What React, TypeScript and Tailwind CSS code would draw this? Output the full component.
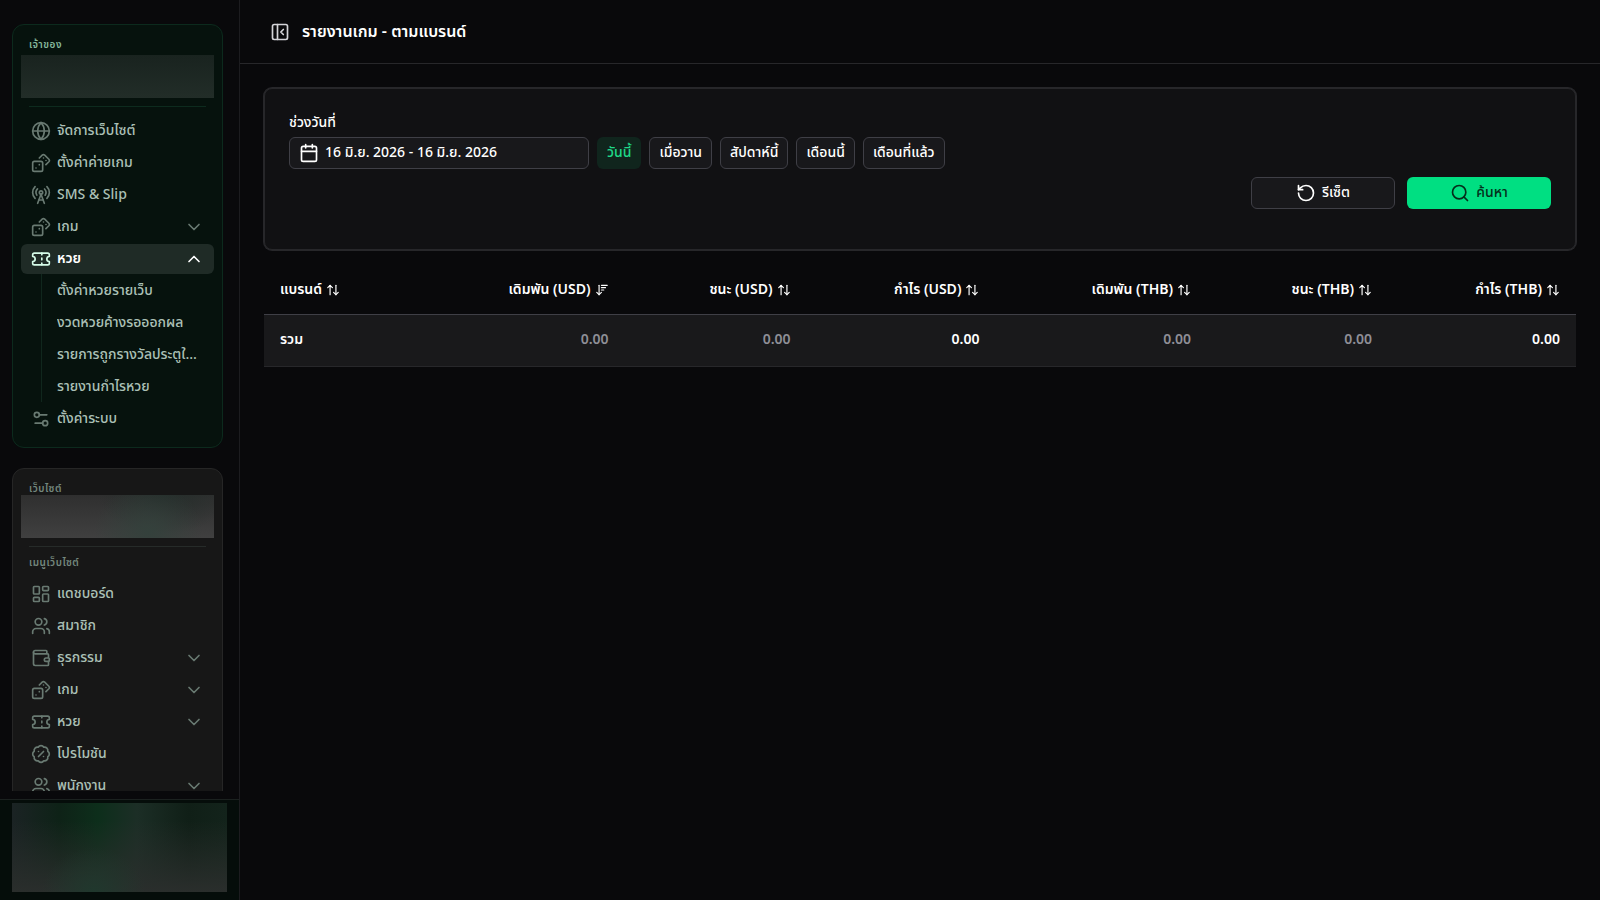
import { useState, type ReactNode } from "react";
import {
  ArrowDownWideNarrow,
  ArrowUpDown,
  BadgePercent,
  Calendar,
  ChevronDown,
  ChevronUp,
  Dices,
  Globe,
  LayoutDashboard,
  PanelLeftClose,
  RadioTower,
  RotateCcw,
  Search,
  Settings2,
  Users,
  Wallet,
  type LucideIcon,
} from "lucide-react";

function TicketIcon({ className }: { className?: string }) {
  return (
    <svg
      viewBox="0 0 24 24"
      fill="none"
      stroke="currentColor"
      strokeWidth="2"
      strokeLinecap="round"
      strokeLinejoin="round"
      className={className}
      aria-hidden="true"
    >
      <path d="M2 9a3 3 0 0 1 0 6v2a2 2 0 0 0 2 2h16a2 2 0 0 0 2-2v-2a3 3 0 0 1 0-6V7a2 2 0 0 0-2-2H4a2 2 0 0 0-2 2Z" />
      <path d="M13 5v2M13 17v2M13 11v2" />
    </svg>
  );
}

type IconType = LucideIcon | typeof TicketIcon;

type Item = { label: string; icon: IconType; expandable?: boolean; children?: string[] };

const ownerItems: Item[] = [
  { label: "จัดการเว็บไซต์", icon: Globe },
  { label: "ตั้งค่าค่ายเกม", icon: Dices },
  { label: "SMS & Slip", icon: RadioTower },
  { label: "เกม", icon: Dices, expandable: true },
  {
    label: "หวย",
    icon: TicketIcon,
    expandable: true,
    children: ["ตั้งค่าหวยรายเว็บ", "งวดหวยค้างรอออกผล", "รายการถูกรางวัลประตูใหญ่", "รายงานกำไรหวย"],
  },
  { label: "ตั้งค่าระบบ", icon: Settings2 },
];

const siteItems: Item[] = [
  { label: "แดชบอร์ด", icon: LayoutDashboard },
  { label: "สมาชิก", icon: Users },
  { label: "ธุรกรรม", icon: Wallet, expandable: true },
  { label: "เกม", icon: Dices, expandable: true },
  { label: "หวย", icon: TicketIcon, expandable: true },
  { label: "โปรโมชัน", icon: BadgePercent },
  { label: "พนักงาน", icon: Users, expandable: true },
];

function NavItem({ item }: { item: Item }) {
  const Icon = item.icon;
  const open = Boolean(item.children);
  const body = (
    <>
      <Icon className={open ? "size-5 shrink-0 text-[#d6fbe8]" : "size-5 shrink-0 text-[#697a72]"} />
      <span className="min-w-0 flex-1 truncate text-left">{item.label}</span>
      {item.expandable &&
        (open ? (
          <ChevronUp className="size-5 shrink-0 text-white" />
        ) : (
          <ChevronDown className="size-5 shrink-0 text-[#697a72]" />
        ))}
    </>
  );
  return (
    <li>
      {item.expandable ? (
        <button
          type="button"
          aria-expanded={open}
          className={
            open
              ? "flex h-[30px] w-full items-center gap-1.5 rounded-md bg-[#1f2b26] px-2.5 font-semibold text-white"
              : "flex h-[30px] w-full items-center gap-1.5 rounded-md px-2.5"
          }
        >
          {body}
        </button>
      ) : (
        <a href="#" className="flex h-[30px] items-center gap-1.5 rounded-md px-2.5">
          {body}
        </a>
      )}
      {item.children && (
        <ul className="ml-5 flex flex-col gap-0.5 border-l border-[#10271d] pt-0.5">
          {item.children.map((label) => (
            <li key={label}>
              <a href="#" className="flex h-[30px] items-center pr-3.5 pl-[15px]">
                <span className="truncate">{label}</span>
              </a>
            </li>
          ))}
        </ul>
      )}
    </li>
  );
}

function NavList({ items }: { items: Item[] }) {
  return (
    <ul className="flex flex-col gap-0.5 text-sm font-medium text-[#abc0b6]">
      {items.map((item) => (
        <NavItem key={item.label} item={item} />
      ))}
    </ul>
  );
}

function Sidebar() {
  return (
    <aside className="flex w-60 shrink-0 flex-col border-r border-[#1c1c1f] bg-[#09090b]">
      <nav className="mb-2 flex min-h-0 flex-1 flex-col gap-5 overflow-hidden pt-6 pr-4 pl-3">
        <section className="shrink-0 rounded-xl border border-[#0c2a1d] bg-[#06120d] px-2 pt-3 pb-[13px]">
          <h2 className="px-2 text-[10px] leading-4 font-semibold tracking-wider text-[#84b69b]">เจ้าของ</h2>
          <div className="mt-0.5 h-[43px] bg-[linear-gradient(to_bottom,#19231f,#222d28)]" />
          <hr className="mx-2 mt-2 mb-[9px] border-[#0d2b1e]" />
          <NavList items={ownerItems} />
        </section>
        <section className="shrink-0 rounded-xl border border-[#262626] bg-[#171717] px-2 pt-3.5 pb-3">
          <h2 className="px-2 text-[10px] leading-3 font-semibold tracking-wider text-[#74877e]">เว็บไซต์</h2>
          <div className="h-[43px] bg-[radial-gradient(ellipse_28%_110%_at_66%_85%,#34413c_0%,transparent_100%),radial-gradient(ellipse_34%_90%_at_74%_0%,#252e2b_0%,transparent_100%),linear-gradient(to_bottom,#2f2f2f,#404040)]" />
          <hr className="mx-2 my-2 border-[#262b29]" />
          <h2 className="mb-2 px-2 text-[10px] leading-4 font-semibold tracking-wider text-[#74877e]">เมนูเว็บไซต์</h2>
          <NavList items={siteItems} />
        </section>
      </nav>
      <footer className="border-t border-[#1b211f] bg-[#050d0a] pt-[3px] pr-3 pb-2 pl-3">
        <div className="h-[89px] bg-[radial-gradient(ellipse_24%_50%_at_38%_100%,#20382d_0%,transparent_100%),linear-gradient(to_top,#2a2e2c_0%,transparent_80%),linear-gradient(to_right,#1b2324_0%,#0e2217_22%,#0d2e1b_40%,#1c2e26_58%,#101f17_82%,#13231b_100%)]" />
      </footer>
    </aside>
  );
}

function PresetButton({ active, children }: { active?: boolean; children: ReactNode }) {
  return (
    <button
      type="button"
      className={
        active
          ? "h-8 rounded-md border border-transparent bg-[#10251d] px-[9px] text-sm font-medium text-[#1fd888]"
          : "h-8 rounded-md border border-[#3f3f46] bg-[#18181b] px-[9px] text-sm font-medium"
      }
    >
      {children}
    </button>
  );
}

function FilterCard() {
  const [range, setRange] = useState("16 มิ.ย. 2026 - 16 มิ.ย. 2026");
  return (
    <form
      className="flex flex-col gap-2 rounded-lg border border-[#27272a] bg-[#111113] px-6 pt-6 pb-10 ring-1 ring-[#27272a]"
      onSubmit={(e) => e.preventDefault()}
    >
      <div className="flex flex-col gap-1">
        <label htmlFor="range" className="text-sm leading-5 font-medium">
          ช่วงวันที่
        </label>
        <div className="flex flex-wrap gap-2">
          <div className="flex h-8 w-[300px] items-center gap-1.5 rounded-md border border-[#3f3f46] bg-[#18181b] px-[9px]">
            <Calendar className="size-5 shrink-0" />
            <input
              id="range"
              value={range}
              onChange={(e) => setRange(e.target.value)}
              className="min-w-0 flex-1 bg-transparent text-sm font-medium outline-none"
            />
          </div>
          <PresetButton active>วันนี้</PresetButton>
          <PresetButton>เมื่อวาน</PresetButton>
          <PresetButton>สัปดาห์นี้</PresetButton>
          <PresetButton>เดือนนี้</PresetButton>
          <PresetButton>เดือนที่แล้ว</PresetButton>
        </div>
      </div>
      <div className="flex justify-end gap-3">
        <button
          type="reset"
          className="flex h-8 w-36 items-center justify-center gap-1.5 rounded-md border border-[#3f3f46] bg-[#18181b] text-sm font-medium"
        >
          <RotateCcw className="size-5" />
          รีเซ็ต
        </button>
        <button
          type="submit"
          className="flex h-8 w-36 items-center justify-center gap-1.5 rounded-md bg-[#00df82] text-sm font-medium text-[#052e1b]"
        >
          <Search className="size-5" />
          ค้นหา
        </button>
      </div>
    </form>
  );
}

type Column = { label: string; total: string; strong?: boolean; sorted?: boolean };

const columns: Column[] = [
  { label: "แบรนด์", total: "รวม", strong: true },
  { label: "เดิมพัน (USD)", total: "0.00", sorted: true },
  { label: "ชนะ (USD)", total: "0.00" },
  { label: "กำไร (USD)", total: "0.00", strong: true },
  { label: "เดิมพัน (THB)", total: "0.00" },
  { label: "ชนะ (THB)", total: "0.00" },
  { label: "กำไร (THB)", total: "0.00", strong: true },
];

function ReportTable() {
  return (
    <table className="mt-4 w-full text-right text-sm">
      <thead>
        <tr className="border-b border-[#3f3f46]">
          {columns.map((c, i) => (
            <th key={c.label} className={i === 0 ? "h-12 px-4 text-left font-semibold" : "h-12 px-4 font-semibold"}>
              <button type="button" className="inline-flex items-center gap-1">
                {c.label}
                {c.sorted ? <ArrowDownWideNarrow className="size-3.5" /> : <ArrowUpDown className="size-3.5" />}
              </button>
            </th>
          ))}
        </tr>
      </thead>
      <tbody>
        <tr className="border-b border-[#27272a] bg-[#19191b] font-semibold">
          {columns.map((c, i) => (
            <td
              key={c.label}
              className={
                i === 0
                  ? "h-[52px] px-4 text-left"
                  : c.strong
                    ? "h-[52px] px-4"
                    : "h-[52px] px-4 text-[#8f8f97]"
              }
            >
              {c.total}
            </td>
          ))}
        </tr>
      </tbody>
    </table>
  );
}

export default function App() {
  return (
    <div className="flex h-screen bg-[#09090b] font-['Noto_Sans_Thai','Noto_Sans',sans-serif] text-white">
      <Sidebar />
      <div className="flex min-w-0 flex-1 flex-col">
        <header className="flex h-16 shrink-0 items-center gap-3 border-b border-[#27272a] px-[30px]">
          <button type="button" aria-label="ย่อเมนู" className="text-[#d4d4d8]">
            <PanelLeftClose className="size-5" />
          </button>
          <h1 className="text-base font-semibold">รายงานเกม - ตามแบรนด์</h1>
        </header>
        <main className="min-h-0 flex-1 p-6">
          <FilterCard />
          <ReportTable />
        </main>
      </div>
    </div>
  );
}
